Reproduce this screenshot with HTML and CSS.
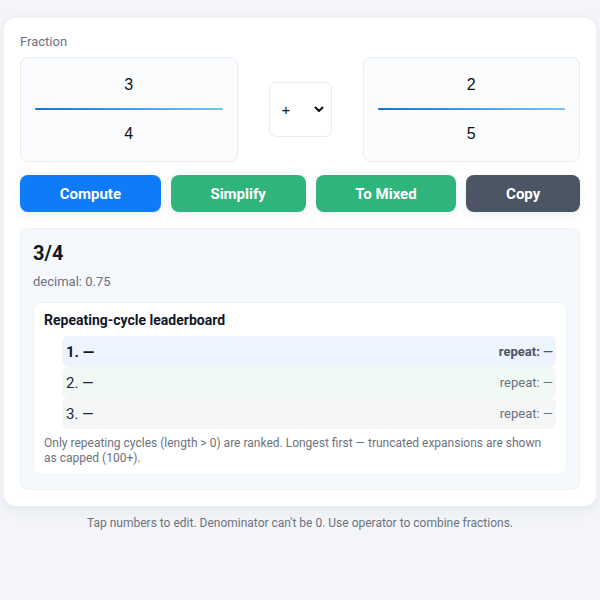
FILE: index.html
```html
<!DOCTYPE html>
<html lang="en">
<head>
<meta charset="utf-8">
<title>Fraction</title>
<link rel="stylesheet" href="styles.css">
</head>
<body>
<main class="card">
  <div class="label">Fraction</div>
  <div class="inputs">
    <div class="frac">
      <div class="num">3</div>
      <div class="bar"></div>
      <div class="num">4</div>
    </div>
    <div class="op">
      <span class="op-sign">+</span>
      <svg class="chev" width="10" height="7" viewBox="0 0 10 7"><path d="M1.5 1.5 L5 5 L8.5 1.5" fill="none" stroke="#111" stroke-width="2" stroke-linecap="round" stroke-linejoin="round"/></svg>
    </div>
    <div class="frac">
      <div class="num">2</div>
      <div class="bar"></div>
      <div class="num">5</div>
    </div>
  </div>
  <div class="actions">
    <button class="btn blue">Compute</button>
    <button class="btn green">Simplify</button>
    <button class="btn green">To Mixed</button>
    <button class="btn gray">Copy</button>
  </div>
  <section class="result">
    <div class="value">3/4</div>
    <div class="decimal">decimal: 0.75</div>
    <div class="board">
      <div class="board-title">Repeating-cycle leaderboard</div>
      <ol class="rows">
        <li class="row r1"><span>1. —</span><span class="rep">repeat: —</span></li>
        <li class="row r2"><span>2. —</span><span class="rep">repeat: —</span></li>
        <li class="row r3"><span>3. —</span><span class="rep">repeat: —</span></li>
      </ol>
      <p class="note">Only repeating cycles (length &gt; 0) are ranked. Longest first — truncated expansions are shown as capped (100+).</p>
    </div>
  </section>
</main>
<p class="footer">Tap numbers to edit. Denominator can't be 0. Use operator to combine fractions.</p>
</body>
</html>
```
FILE: styles.css
```css
* { box-sizing: border-box; }
html, body { margin: 0; }
body {
  background: #f3f5f9;
  padding: 18px 4px 0;
  font-family: Roboto, "Liberation Sans", sans-serif;
  color: #111827;
}
.card {
  background: #fff;
  border-radius: 12px;
  box-shadow: 0 4px 14px rgba(30, 41, 59, 0.07);
  padding: 16px 16px 16px;
}
.label {
  font-size: 13px;
  line-height: 16px;
  color: #6b7280;
  margin-bottom: 7px;
}
.inputs {
  display: flex;
  align-items: center;
  gap: 31px;
}
.frac {
  flex: 1;
  border: 1px solid #e8edf3;
  background: #fafcfe;
  border-radius: 8px;
  padding: 10px 14px;
  display: flex;
  flex-direction: column;
}
.num {
  height: 34px;
  line-height: 34px;
  text-align: center;
  font-family: "Liberation Sans", Arial, sans-serif;
  font-size: 16px;
  color: #111;
}
.bar {
  height: 2px;
  margin: 6px 0 7px;
  background: linear-gradient(90deg, #1d6fd0, #7cc4ee);
  border-radius: 1px;
}
.op {
  width: 63px;
  height: 55px;
  border: 1px solid #e8edf3;
  border-radius: 7px;
  background: #fff;
  display: flex;
  align-items: center;
  justify-content: space-between;
  padding: 0 7px 0 12px;
  font-family: "Liberation Sans", Arial, sans-serif;
  font-size: 15px;
  color: #111;
}
.chev { display: block; }
.actions {
  display: flex;
  gap: 10px;
  margin-top: 13px;
}
.btn {
  flex: 1 1 auto;
  height: 37px;
  border: 0;
  border-radius: 8px;
  font-family: Roboto, sans-serif;
  font-size: 15px;
  font-weight: 700;
  color: #fff;
  padding: 0 12px;
  box-shadow: 0 3px 8px rgba(30, 41, 59, 0.08);
}
.blue { background: #0f7bf8; }
.green { background: #2fb47c; }
.gray { background: #4b5563; }
.result {
  margin-top: 16px;
  background: #f5f8fc;
  border: 1px solid #eef2f7;
  border-radius: 8px;
  padding: 12px 12px 14px;
}
.value {
  font-size: 20px;
  font-weight: 700;
  line-height: 24px;
  color: #111827;
}
.decimal {
  margin-top: 8px;
  font-size: 13px;
  line-height: 17px;
  color: #6b7280;
}
.board {
  margin-top: 12px;
  background: #fff;
  border: 1px solid #f0f3f7;
  border-radius: 8px;
  padding: 8px 10px 8px;
}
.board-title {
  font-size: 14px;
  font-weight: 700;
  line-height: 18px;
  color: #111827;
}
.rows {
  list-style: none;
  margin: 7px 0 0;
  padding: 0 0 0 18px;
}
.row {
  height: 31px;
  display: flex;
  align-items: center;
  justify-content: space-between;
  padding: 0 3px 0 4px;
  border-radius: 6px;
  font-size: 15px;
  color: #1f2937;
}
.rep { font-size: 13px; color: #6b7280; }
.r1 { background: #eef4fd; font-weight: 700; color: #111827; }
.r1 .rep { font-weight: 700; color: #4b5563; }
.r2 { background: #f0f9f4; }
.r3 { background: #f5f6f8; }
.note {
  margin: 7px 0 0;
  font-size: 12px;
  line-height: 15px;
  color: #6b7280;
}
.footer {
  margin: 9px 0 0;
  text-align: center;
  font-size: 12px;
  line-height: 16px;
  color: #6b7280;
}
```
